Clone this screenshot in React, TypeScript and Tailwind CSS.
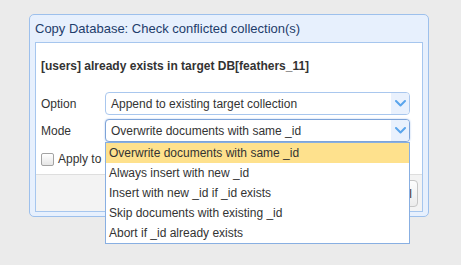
import React from 'react';

const MODES = [
  'Overwrite documents with same _id',
  'Always insert with new _id',
  'Insert with new _id if _id exists',
  'Skip documents with existing _id',
  'Abort if _id already exists',
];

const Chevron = () => (
  <svg width="11" height="7" viewBox="0 0 11 7" fill="none">
    <path d="M1 1l4.5 4.5L10 1" stroke="#5aa5ec" strokeWidth="2" strokeLinecap="round" strokeLinejoin="round" />
  </svg>
);

const Select = ({ value, focused }: { value: string; focused?: boolean }) => (
  <div
    className={`flex w-[305px] h-[23px] rounded-[4px] border bg-white overflow-hidden ${
      focused ? 'border-[#7da3d8] shadow-[0_0_2px_#a9c6ee]' : 'border-[#a9c7ee]'
    }`}
  >
    <div className="flex-1 pl-[5px] flex items-center text-[12px] text-[#333]">{value}</div>
    <div className="w-[18px] bg-[#e9f1fd] flex items-center justify-center">
      <Chevron />
    </div>
  </div>
);

export default function App() {
  return (
    <div
      className="min-h-screen bg-[#ebebeb] pt-[14px] pl-[29px]"
      style={{ fontFamily: '"Liberation Sans", Arial, sans-serif' }}
    >
      <div className="relative w-[400px] rounded-[5px] border border-[#9dc0ec] bg-[#e7f0fd]">
        {/* Header */}
        <div className="h-[27px] pl-[5px] flex items-center text-[13px] text-[#1e3d6b]">
          Copy Database: Check conflicted collection(s)
        </div>

        {/* Body */}
        <div className="mx-[5px] mb-[4px] border border-[#a6c6ee] bg-white">
          <div className="px-[5px]">
            <div className="h-[46px] flex items-center text-[12px] font-bold text-[#333]">
              [users] already exists in target DB[feathers_11]
            </div>
            <div className="mt-[3px] flex flex-col gap-[4px]">
              <div className="flex items-center">
                <div className="w-[64px] text-[12px] text-[#333]">Option</div>
                <Select value="Append to existing target collection" />
              </div>
              <div className="flex items-center">
                <div className="w-[64px] text-[12px] text-[#333]">Mode</div>
                <Select value="Overwrite documents with same _id" focused />
              </div>
            </div>
            <div className="mt-[8px] mb-[6px] flex items-center gap-[4px]">
              <div className="w-[13px] h-[13px] rounded-[2px] border border-[#a3a3a3] bg-gradient-to-b from-white to-[#e6e6e6]" />
              <span className="text-[12px] text-[#333]">Apply to all</span>
            </div>
          </div>

          {/* Footer */}
          <div className="h-[37px] border-t border-[#dedede] bg-[#f3f3f3] flex items-start justify-end pt-[5px] pr-[4px] gap-[6px]">
            <button className="h-[27px] px-[10px] rounded-[4px] border border-[#c6c6c6] bg-gradient-to-b from-[#fdfdfd] to-[#ececec] text-[12px] text-[#333]">
              OK
            </button>
            <button className="h-[27px] pl-[10px] pr-[5px] rounded-[4px] border border-[#c6c6c6] bg-gradient-to-b from-[#fdfdfd] to-[#ececec] text-[12px] text-[#333]">
              Cancel
            </button>
          </div>
        </div>

        {/* Open dropdown list */}
        <div className="absolute left-[75px] top-[127px] w-[305px] border border-[#88afe2] bg-white">
          {MODES.map((m, i) => (
            <div
              key={m}
              className={`h-[20px] pl-[3px] flex items-center text-[12px] text-[#333] ${
                i === 0 ? 'bg-[#fee18d]' : ''
              }`}
            >
              {m}
            </div>
          ))}
        </div>
      </div>
    </div>
  );
}
